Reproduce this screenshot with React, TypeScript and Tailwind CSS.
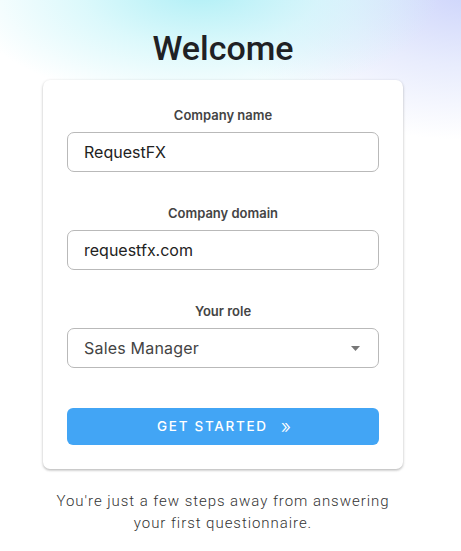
import React, { useState } from "react";

const roles = ["Sales Manager", "Security Analyst", "Account Executive", "Other"];

const App: React.FC = () => {
  const [name, setName] = useState("RequestFX");
  const [domain, setDomain] = useState("requestfx.com");
  const [role, setRole] = useState("Sales Manager");

  return (
    <div className="relative min-h-[551px] w-full overflow-hidden bg-white font-['Inter',sans-serif]">
      {/* soft gradient glow at the top */}
      <div className="pointer-events-none absolute inset-x-0 top-0 h-[160px] bg-[radial-gradient(ellipse_240px_115px_at_200px_-10px,#b0eff6_0%,rgba(205,246,250,0.7)_50%,rgba(255,255,255,0)_100%),radial-gradient(ellipse_260px_150px_at_470px_-10px,#cdd4fb_0%,rgba(222,228,252,0.7)_50%,rgba(255,255,255,0)_100%)]" />

      <div className="relative flex w-[446px] flex-col items-center pt-[28px]">
        <h1 className="font-['Roboto',sans-serif] text-[34px] font-medium leading-[40px] text-[#202124]">
          Welcome
        </h1>

        <div className="mt-[12px] w-[360px] rounded-[7px] bg-white px-6 pt-[25px] pb-[24px] shadow-[0_1px_3px_rgba(0,0,0,0.25),0_2px_2px_rgba(0,0,0,0.06)]">
          <label className="block text-center text-[13px] font-semibold leading-5 text-[#444]">
            Company name
          </label>
          <input
            value={name}
            onChange={(e) => setName(e.target.value)}
            className="mt-[7px] block h-10 w-full rounded-[7px] border border-[#b9b9b9] px-4 text-[16px] text-[#222] outline-none"
          />

          <label className="mt-[31px] block text-center text-[13px] font-semibold leading-5 text-[#444]">
            Company domain
          </label>
          <input
            value={domain}
            onChange={(e) => setDomain(e.target.value)}
            className="mt-[7px] block h-10 w-full rounded-[7px] border border-[#b9b9b9] px-4 text-[16px] text-[#222] outline-none"
          />

          <label className="mt-[31px] block text-center text-[13px] font-semibold leading-5 text-[#444]">
            Your role
          </label>
          <div className="relative mt-[7px]">
            <select
              value={role}
              onChange={(e) => setRole(e.target.value)}
              className="block h-10 w-full appearance-none rounded-[7px] border border-[#b9b9b9] bg-white px-4 text-[16px] tracking-[0.2px] text-[#444] outline-none"
            >
              {roles.map((r) => (
                <option key={r} value={r}>
                  {r}
                </option>
              ))}
            </select>
            <svg
              className="pointer-events-none absolute right-[19px] top-[18px]"
              width="9"
              height="5"
              viewBox="0 0 9 5"
            >
              <path d="M0 0h9L4.5 5z" fill="#777" />
            </svg>
          </div>

          <button className="mt-10 flex h-[37px] w-full items-center justify-center gap-[13px] rounded-[6px] bg-[#42a5f5] pl-[2px] text-[13.5px] font-medium tracking-[1.7px] text-white">
            <span>GET STARTED</span>
            <span className="text-[19px] font-light leading-none tracking-normal">»</span>
          </button>
        </div>

        <p className="mt-[21px] w-[350px] text-center font-['Roboto',sans-serif] text-[15px] font-light leading-[22px] tracking-[0.95px] text-[#333]">
          You're just a few steps away from answering your first questionnaire.
        </p>
      </div>
    </div>
  );
};

export default App;
